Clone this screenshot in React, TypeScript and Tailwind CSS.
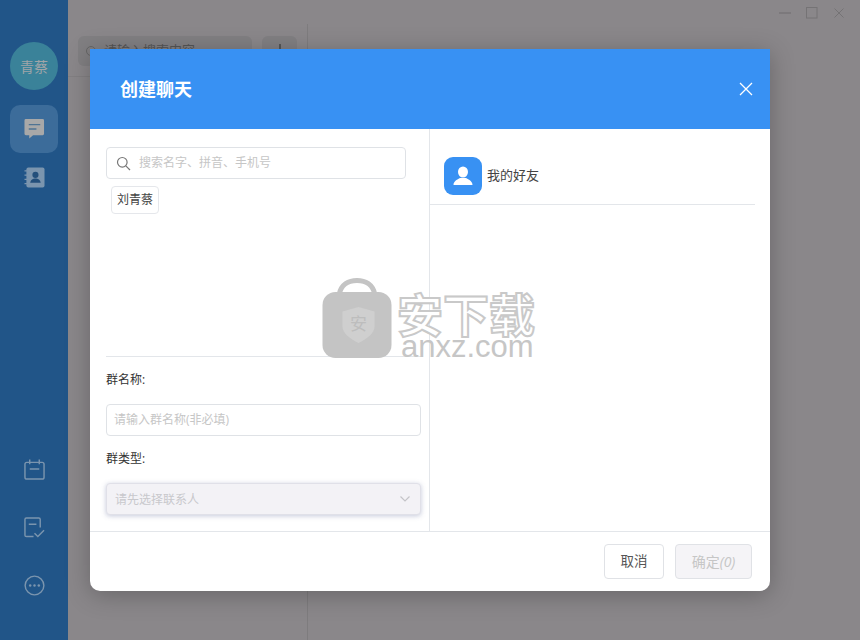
import React from "react";

const CJK = "font-['Open_Sans','Noto_Sans_CJK_SC',sans-serif]";

function SideIcon({ children, active }: { children: React.ReactNode; active?: boolean }) {
  return (
    <div className={`flex h-12 w-12 items-center justify-center rounded-[10px] pl-px ${active ? "bg-[#3c6c9a]" : ""}`}>
      {children}
    </div>
  );
}

function Sidebar() {
  return (
    <aside className="flex h-full w-[68px] shrink-0 flex-col items-center bg-[#215588] pt-[42px] pb-[31px]">
      <div className="flex h-12 w-12 items-center justify-center rounded-full bg-[#3a8299] text-[14px] text-[#a0a5a8]">青蔡</div>
      <div className="mt-[15px]">
        <SideIcon active>
          <svg width="21" height="22" viewBox="0 0 22 22">
            <path d="M2 0.500h17.500a1.500 1.500 0 0 1 1.500 1.500v14a1.500 1.500 0 0 1-1.500 1.500H9.500L5.500 21v-3.500H2A1.500 1.500 0 0 1 .5 16V2A1.500 1.500 0 0 1 2 .5z" fill="#a8a8a8" />
            <path d="M5 6.500h12M5 11h8" stroke="#4f7393" strokeWidth="1.400" />
          </svg>
        </SideIcon>
      </div>
      <SideIcon>
        <svg width="21" height="21" viewBox="0 0 22 22">
          <rect x="2.500" y="0.500" width="19" height="21" rx="2" fill="#7b95ae" />
          <path d="M0.500 4h3M0.500 8.500h3M0.500 13h3M0.500 17.500h3" stroke="#7b95ae" strokeWidth="1.300" />
          <circle cx="12" cy="8.300" r="3.200" fill="#234f7b" />
          <path d="M6.500 16.500c.5-3.500 3-4.500 5.500-4.500s5 1 5.500 4.500z" fill="#234f7b" />
        </svg>
      </SideIcon>
      <div className="mt-auto flex flex-col items-center gap-[10px]">
        <SideIcon>
          <svg width="21" height="21" viewBox="0 0 22 22" fill="none" stroke="#7b95ae" strokeWidth="1.500">
            <rect x="1" y="3.500" width="20" height="17.500" rx="2" />
            <path d="M6 0.500v5M16 0.500v5M6 10.500h10" />
          </svg>
        </SideIcon>
        <SideIcon>
          <svg width="21" height="21" viewBox="0 0 22 22" fill="none" stroke="#7b95ae" strokeWidth="1.500">
            <path d="M10 20.500H2.500A1.500 1.500 0 0 1 1 19V2.500A1.500 1.500 0 0 1 2.500 1h13A1.500 1.500 0 0 1 17 2.500V11" />
            <path d="M5 7.500h8M11 17l3.500 3.500L21 14" />
          </svg>
        </SideIcon>
        <SideIcon>
          <svg width="21" height="21" viewBox="0 0 22 22" fill="none">
            <circle cx="11" cy="11" r="9.800" stroke="#7b95ae" strokeWidth="1.500" />
            <circle cx="6.500" cy="11" r="1.300" fill="#7b95ae" />
            <circle cx="11" cy="11" r="1.300" fill="#7b95ae" />
            <circle cx="15.500" cy="11" r="1.300" fill="#7b95ae" />
          </svg>
        </SideIcon>
      </div>
    </aside>
  );
}

function Background() {
  return (
    <div className="flex h-full flex-1 flex-col bg-[#8a878a]">
      <div className="flex h-6 items-center justify-end gap-[13px] pr-[14px] pt-[2px]">
        <svg width="14" height="14" viewBox="0 0 14 14" stroke="#757375" strokeWidth="1.300"><path d="M1 7h12" /></svg>
        <svg width="14" height="14" viewBox="0 0 14 14" fill="none" stroke="#757375"><rect x="1.500" y="1.500" width="10.500" height="10.500" /></svg>
        <svg width="14" height="14" viewBox="0 0 14 14" stroke="#757375"><path d="M2.500 2.500l9 9M11.500 2.500l-9 9" /></svg>
      </div>
      <div className="flex flex-1">
        <div className="flex w-[240px] flex-col border-r border-[#7e7c7e]">
          <div className="flex h-[53px] items-start gap-[10px] border-b border-[#827f82] pl-[10px] pt-[12px]">
            <div className="flex h-[30px] w-[174px] items-center gap-2 rounded-md bg-[#817f82] pl-2 text-[13px] text-[#555]">
              <div className="h-2.5 w-2.5 rounded-full border border-[#666]" />
              <span>请输入搜索内容</span>
            </div>
            <div className="flex h-[30px] w-[35px] items-center justify-center rounded-md bg-[#817f82]">
              <svg width="14" height="14" viewBox="0 0 14 14" stroke="#555" strokeWidth="2"><path d="M7 0v14M0 7h14" /></svg>
            </div>
          </div>
        </div>
      </div>
    </div>
  );
}

function Watermark() {
  return (
    <div className="pointer-events-none absolute left-[322px] top-[278px] flex items-start">
      <svg width="71" height="80" viewBox="0 0 71 80">
        <path d="M17 17C19 6 27 2.500 35 2.500S51 6 53 17" fill="none" stroke="#c4c4c4" strokeWidth="5" />
        <rect x="0.500" y="14" width="69" height="66" rx="13" fill="#c4c4c4" />
        <path d="M36.500 29l16 4.500v15c0 7-8 12.500-16 16.500-8-4-16-9.500-16-16.500v-15z" fill="#cfcfcf" />
        <text x="36.500" y="52" textAnchor="middle" fontSize="17" fill="#bdbdbd">安</text>
      </svg>
      <div className="ml-[4px] flex flex-col">
        <span className="mt-[15px] text-[46px] font-bold leading-[42px] text-white [-webkit-text-stroke:2px_#c9c9c9]">安下载</span>
        <span className="ml-[4px] font-['Liberation_Sans',sans-serif] text-[31px] leading-[24px] text-[#c6c6c6]">anxz.com</span>
      </div>
    </div>
  );
}

function Modal() {
  return (
    <div className="flex h-[542px] w-[680px] flex-col overflow-hidden rounded-b-[10px] bg-white shadow-[0_4px_24px_rgba(0,0,0,0.25)]">
      <header className="flex h-20 shrink-0 items-center justify-between bg-[#3891f3] pl-[30px] pr-[17px]">
        <h1 className="text-[18px] font-bold text-white">创建聊天</h1>
        <svg width="14" height="14" viewBox="0 0 14 14" stroke="white" strokeWidth="1.300"><path d="M1 1l12 12M13 1L1 13" /></svg>
      </header>
      <div className="flex min-h-0 flex-1">
        <div className="flex w-[340px] shrink-0 flex-col border-r border-[#e3e6ea]">
          <div className="ml-4 mr-[8px] flex h-[228px] flex-col border-b border-[#e3e6ea] pt-[18px]">
            <div className="flex h-8 w-[300px] items-center rounded border border-[#dfe2e6] pl-[9px]">
              <svg width="15" height="15" viewBox="0 0 15 15" fill="none" stroke="#777" strokeWidth="1.200"><circle cx="6.300" cy="6.300" r="4.800" /><path d="M9.800 9.800L14 14" /></svg>
              <span className="ml-[8px] text-[12px] text-[#c6c6c6]">搜索名字、拼音、手机号</span>
            </div>
            <div className="ml-[5px] mt-[7px] flex h-[28px] w-[48px] items-center justify-center rounded border border-[#e5e7eb] text-[12px] text-[#444]">刘青蔡</div>
          </div>
          <div className="flex flex-1 flex-col pl-4 pr-2">
            <div className="mt-[14px] text-[12px] leading-[18px] text-[#333]">群名称:</div>
            <div className="mt-[15px] flex h-8 items-center rounded border border-[#dfe2e6] pl-[7px] text-[12px] text-[#c6c6c6]">请输入群名称(非必填)</div>
            <div className="mt-[14px] text-[12px] leading-[18px] text-[#333]">群类型:</div>
            <div className="mt-[15px] flex h-8 items-center justify-between rounded border border-[#e0e0e8] bg-[#f3f2f6] pl-2 pr-[10px] text-[12px] text-[#c8c8cc] shadow-[0_1px_5px_rgba(90,100,150,0.35)]">
              <span className="pt-px">请先选择联系人</span>
              <svg width="10" height="6" viewBox="0 0 10 6" fill="none" stroke="#c4c4c8" strokeWidth="1.200"><path d="M.5.500L5 5l4.500-4.500" /></svg>
            </div>
          </div>
        </div>
        <div className="flex-1 pr-[15px]">
          <div className="flex h-[76px] items-center border-b border-[#e3e6ea] pl-[14px] pt-[18px]">
            <div className="flex h-[38px] w-[38px] items-center justify-center rounded-[9px] bg-[#3891f3]">
              <svg width="20" height="20" viewBox="0 0 20 20" fill="white">
                <ellipse cx="10" cy="6" rx="5" ry="5.500" />
                <path d="M0.500 19c0-4 4-5.500 6.500-7h6c2.500 1.500 6.500 3 6.500 7z" />
              </svg>
            </div>
            <span className="ml-[5px] text-[13px] text-[#444]">我的好友</span>
          </div>
        </div>
      </div>
      <footer className="flex h-[60px] shrink-0 items-center justify-end gap-[11px] border-t border-[#e3e6ea] pr-[18px]">
        <button className="h-[35px] w-[60px] rounded border border-[#e0e2e6] text-[13.500px] text-[#555]">取消</button>
        <button className="h-[35px] w-[77px] rounded border border-[#e0e2e6] bg-[#f5f4f7] text-[14px] text-[#c6c6c6]">确定<i>(0)</i></button>
      </footer>
    </div>
  );
}

export default function App() {
  return (
    <div className={`relative flex h-[640px] w-[860px] overflow-hidden ${CJK}`}>
      <Sidebar />
      <Background />
      <div className="absolute inset-0 flex items-center justify-center">
        <Modal />
      </div>
      <Watermark />
    </div>
  );
}
